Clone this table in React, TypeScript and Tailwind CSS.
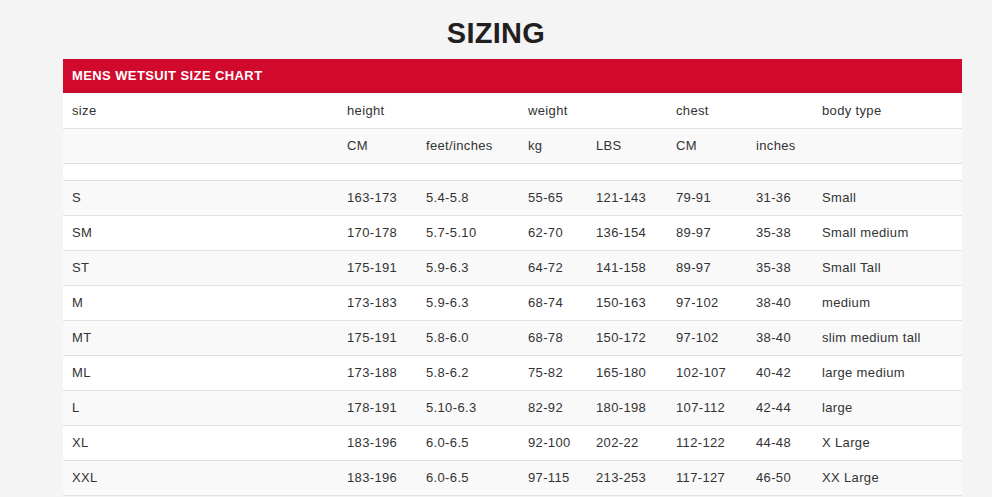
const COLS = [
  { w: 275 },
  { w: 79 },
  { w: 102 },
  { w: 68 },
  { w: 80 },
  { w: 80 },
  { w: 66 },
  { w: 149 },
]

const HEAD: string[][] = [
  ['size', 'height', '', 'weight', '', 'chest', '', 'body type'],
  ['', 'CM', 'feet/inches', 'kg', 'LBS', 'CM', 'inches', ''],
]

const ROWS: string[][] = [
  ['S', '163-173', '5.4-5.8', '55-65', '121-143', '79-91', '31-36', 'Small'],
  ['SM', '170-178', '5.7-5.10', '62-70', '136-154', '89-97', '35-38', 'Small medium'],
  ['ST', '175-191', '5.9-6.3', '64-72', '141-158', '89-97', '35-38', 'Small Tall'],
  ['M', '173-183', '5.9-6.3', '68-74', '150-163', '97-102', '38-40', 'medium'],
  ['MT', '175-191', '5.8-6.0', '68-78', '150-172', '97-102', '38-40', 'slim medium tall'],
  ['ML', '173-188', '5.8-6.2', '75-82', '165-180', '102-107', '40-42', 'large medium'],
  ['L', '178-191', '5.10-6.3', '82-92', '180-198', '107-112', '42-44', 'large'],
  ['XL', '183-196', '6.0-6.5', '92-100', '202-22', '112-122', '44-48', 'X Large'],
  ['XXL', '183-196', '6.0-6.5', '97-115', '213-253', '117-127', '46-50', 'XX Large'],
]

export default function App() {
  // header rows + spacer row + data rows, striped like nth-child(even)
  const all: (string[] | null)[] = [...HEAD, null, ...ROWS]

  return (
    <div className="min-h-[497px] bg-[#f4f4f4] font-['Liberation_Sans',Arial,sans-serif] text-[#333]">
      <h1 className="pt-[17px] pb-[10px] text-center text-[29px] font-bold leading-[32px] tracking-[0.3px] text-[#231f20]">
        SIZING
      </h1>

      <div className="ml-[63px] w-[899px]">
        <div className="flex h-[34px] items-center border-b border-[#b80d2c] bg-[#d10a2d] px-[9px] text-[13px] font-bold tracking-[0.4px] text-white">
          MENS WETSUIT SIZE CHART
        </div>

        <table className="w-[899px] table-fixed text-[13px] tracking-[0.35px]">
          <colgroup>
            {COLS.map((c, i) => <col key={i} style={{ width: c.w }} />)}
          </colgroup>
          <tbody>
            {all.map((row, i) => (
              <tr key={i}
                className={(i % 2 === 1 ? 'bg-[#f9f9f9] ' : 'bg-white ') +
                  (row ? 'h-[35px] ' : 'h-[17px] ') + 'border-b border-[#e2e2e2]'}>
                {row
                  ? row.map((cell, j) => (
                      <td key={j} className="px-[9px] align-middle leading-[15px] whitespace-nowrap">{cell}</td>
                    ))
                  : <td colSpan={8} />}
              </tr>
            ))}
          </tbody>
        </table>
      </div>
    </div>
  )
}
